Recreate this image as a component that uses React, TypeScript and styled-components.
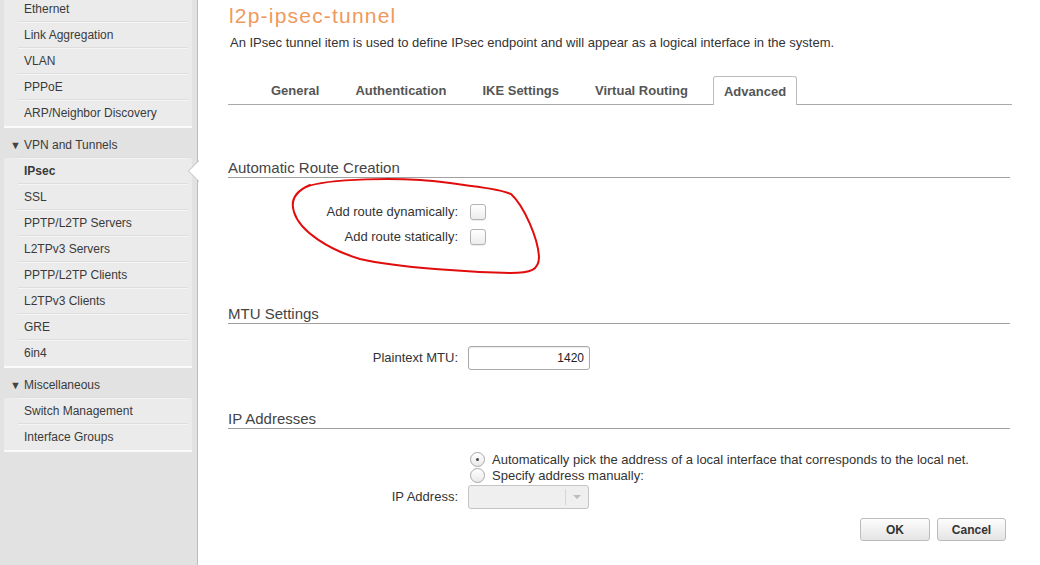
import React from 'react'
import styled, { createGlobalStyle } from 'styled-components'

const GlobalStyle = createGlobalStyle`
  html, body {
    margin: 0;
    padding: 0;
    background: #fff;
    font-family: "Liberation Sans", Arial, sans-serif;
    color: #333;
  }
`

const Page = styled.div`
  display: flex;
  width: 1040px;
  height: 565px;
  overflow: hidden;
`

const Sidebar = styled.nav`
  width: 197px;
  flex-shrink: 0;
  background: #e2e2e2;
  border-right: 1px solid #bcbcbc;
  font-size: 12px;
  color: #3a3a3a;
`

const Group = styled.div<{ $first?: boolean }>`
  margin: ${(p) => (p.$first ? '-4px' : '0')} 5px 0 4px;
  background: #ebebeb;
  border-bottom: 2px solid #fafafa;
`

const GroupHeader = styled.div`
  display: flex;
  align-items: center;
  height: 27px;
  margin-top: 3px;
  padding-left: 10px;
  gap: 3px;
`

const Caret = styled.span`
  font-size: 11px;
  width: 11px;
  color: #444;
`

const Item = styled.div<{ $active?: boolean }>`
  position: relative;
  height: 26px;
  display: flex;
  align-items: center;
  padding-left: 20px;
  font-weight: ${(p) => (p.$active ? 'bold' : 'normal')};
  &::before {
    content: '';
    position: absolute;
    top: 0;
    left: 14px;
    right: 4px;
    height: 1px;
    background: #f5f5f5;
    box-shadow: 0 -1px 0 #dedede;
  }
`

const Notch = styled.span`
  position: absolute;
  right: -7px;
  top: 2px;
  width: 0;
  height: 0;
  border-top: 11px solid transparent;
  border-bottom: 11px solid transparent;
  border-right: 11px solid #bcbcbc;
  &::after {
    content: '';
    position: absolute;
    left: 1px;
    top: -11px;
    border-top: 11px solid transparent;
    border-bottom: 11px solid transparent;
    border-right: 11px solid #fff;
  }
`

const Main = styled.main`
  flex: 1;
  padding: 4px 28px 0 30px;
  min-width: 0;
`

const Title = styled.h1`
  margin: 0 0 0 1px;
  font-size: 21px;
  line-height: 24px;
  font-weight: normal;
  letter-spacing: 1.2px;
  color: #f0995c;
`

const Description = styled.p`
  margin: 7px 0 0 2px;
  font-size: 13px;
  line-height: 16px;
  color: #333;
`

const Tabs = styled.div`
  display: flex;
  gap: 14px;
  height: 28px;
  margin-top: 25px;
  padding-left: 32px;
  border-bottom: 1px solid #a9a9a9;
`

const Tab = styled.div<{ $active?: boolean }>`
  display: flex;
  align-items: center;
  padding: 0 10px;
  font-size: 13px;
  font-weight: bold;
  color: #555;
  border: 1px solid ${(p) => (p.$active ? '#bcbcbc' : 'transparent')};
  border-bottom: none;
  border-radius: 3px 3px 0 0;
  background: #fff;
  margin-bottom: ${(p) => (p.$active ? '-1px' : '0')};
`

const Section = styled.section<{ $top: number }>`
  margin-top: ${(p) => p.$top}px;
  margin-right: 2px;
`

const Heading = styled.h2`
  margin: 0;
  font-size: 15px;
  line-height: 18px;
  font-weight: normal;
  color: #444;
  border-bottom: 1px solid #a0a0a0;
`

const Body = styled.div<{ $pt?: number }>`
  position: relative;
  display: grid;
  grid-template-columns: 230px 1fr;
  column-gap: 10px;
  padding-top: ${(p) => p.$pt ?? 21}px;
  font-size: 13px;
`

const Label = styled.label`
  grid-column: 1;
  text-align: right;
  align-self: center;
  color: #333;
`

const Row = styled.div`
  display: contents;
`

const Control = styled.div<{ $h?: number; $mt?: number }>`
  grid-column: 2;
  display: flex;
  align-items: center;
  height: ${(p) => p.$h ?? 25}px;
  margin-top: ${(p) => p.$mt ?? 0}px;
`

const Checkbox = styled.span`
  width: 14px;
  height: 14px;
  margin-left: 2px;
  border: 1px solid #b3b3b3;
  border-radius: 3px;
  background: linear-gradient(#ffffff, #ececec);
  box-shadow: 0 1px 1px rgba(0, 0, 0, 0.08);
`

const TextInput = styled.div`
  box-sizing: border-box;
  width: 122px;
  height: 24px;
  border: 1px solid #a8a8a8;
  border-radius: 3px;
  box-shadow: inset 0 1px 1px rgba(0, 0, 0, 0.08);
  display: flex;
  align-items: center;
  justify-content: flex-end;
  padding-right: 5px;
  font-size: 12px;
  color: #222;
`

const Select = styled.div`
  box-sizing: border-box;
  width: 121px;
  height: 24px;
  border: 1px solid #c4c4c4;
  border-radius: 3px;
  background: #efefef;
  display: flex;
  justify-content: flex-end;
`

const SelectArrow = styled.span`
  width: 22px;
  border-left: 1px solid #d6d6d6;
  margin: 3px 0;
  display: flex;
  align-items: center;
  justify-content: center;
  &::after {
    content: '';
    border-left: 4px solid transparent;
    border-right: 4px solid transparent;
    border-top: 4px solid #bdbdbd;
  }
`

const Radio = styled.span<{ $checked?: boolean }>`
  box-sizing: border-box;
  width: 15px;
  height: 15px;
  margin: 0 7px 0 2px;
  border: 1px solid #a9a9a9;
  border-radius: 50%;
  background: linear-gradient(#ffffff, #e9e9e9);
  display: flex;
  align-items: center;
  justify-content: center;
  flex-shrink: 0;
  &::after {
    content: '';
    display: ${(p) => (p.$checked ? 'block' : 'none')};
    width: 3px;
    height: 3px;
    border-radius: 50%;
    background: #444;
  }
`

const RadioText = styled.span`
  font-size: 13px;
  white-space: nowrap;
  color: #333;
`

const Scribble = styled.svg`
  position: absolute;
  left: 62px;
  top: -3px;
  pointer-events: none;
`

const Buttons = styled.div`
  display: flex;
  justify-content: flex-end;
  gap: 7px;
  margin: 9px 6px 0 0;
`

const Button = styled.button<{ $w: number }>`
  width: ${(p) => p.$w}px;
  height: 23px;
  padding: 0;
  border: 1px solid #bcbcbc;
  border-radius: 3px;
  background: linear-gradient(#fdfdfd, #e4e4e4);
  font-family: "Liberation Sans", Arial, sans-serif;
  font-size: 12px;
  font-weight: bold;
  color: #333;
`

const groups = [
  {
    header: null,
    items: ['Ethernet', 'Link Aggregation', 'VLAN', 'PPPoE', 'ARP/Neighbor Discovery'],
  },
  {
    header: 'VPN and Tunnels',
    items: ['IPsec', 'SSL', 'PPTP/L2TP Servers', 'L2TPv3 Servers', 'PPTP/L2TP Clients', 'L2TPv3 Clients', 'GRE', '6in4'],
  },
  {
    header: 'Miscellaneous',
    items: ['Switch Management', 'Interface Groups'],
  },
]

const tabs = ['General', 'Authentication', 'IKE Settings', 'Virtual Routing', 'Advanced']

const App = () => {
  return (
    <Page>
      <GlobalStyle />
      <Sidebar>
        {groups.map((g, gi) => (
          <React.Fragment key={gi}>
            {g.header && (
              <GroupHeader>
                <Caret>▼</Caret>
                {g.header}
              </GroupHeader>
            )}
            <Group $first={gi === 0}>
              {g.items.map((it) => (
                <Item key={it} $active={it === 'IPsec'}>
                  {it}
                  {it === 'IPsec' && <Notch />}
                </Item>
              ))}
            </Group>
          </React.Fragment>
        ))}
      </Sidebar>

      <Main>
        <Title>l2p-ipsec-tunnel</Title>
        <Description>
          An IPsec tunnel item is used to define IPsec endpoint and will appear as a logical interface in the system.
        </Description>

        <Tabs>
          {tabs.map((t) => (
            <Tab key={t} $active={t === 'Advanced'}>{t}</Tab>
          ))}
        </Tabs>

        <Section $top={54}>
          <Heading>Automatic Route Creation</Heading>
          <Body>
            <Row>
              <Label>Add route dynamically:</Label>
              <Control><Checkbox /></Control>
            </Row>
            <Row>
              <Label>Add route statically:</Label>
              <Control><Checkbox /></Control>
            </Row>
            <Scribble width="255" height="103" viewBox="290 175 255 103">
              <path
                d="M306 187 C 325 179, 400 176, 450 183 C 480 187, 498 189, 511 194 C 524 206, 538 238, 539 257 C 539 270, 531 273, 510 273 C 470 272, 400 268, 360 259 C 330 250, 300 232, 294 212 C 290 200, 296 191, 310 185"
                fill="none"
                stroke="#e10d0d"
                strokeWidth="2"
                strokeLinecap="round"
              />
            </Scribble>
          </Body>
        </Section>

        <Section $top={56}>
          <Heading>MTU Settings</Heading>
          <Body>
            <Row>
              <Label>Plaintext MTU:</Label>
              <Control><TextInput>1420</TextInput></Control>
            </Row>
          </Body>
        </Section>

        <Section $top={40}>
          <Heading>IP Addresses</Heading>
          <Body $pt={22}>
            <Control $h={16}>
              <Radio $checked />
              <RadioText>Automatically pick the address of a local interface that corresponds to the local net.</RadioText>
            </Control>
            <Control $h={16}>
              <Radio />
              <RadioText>Specify address manually:</RadioText>
            </Control>
            <Row>
              <Label>IP Address:</Label>
              <Control $mt={1}>
                <Select><SelectArrow /></Select>
              </Control>
            </Row>
          </Body>
        </Section>

        <Buttons>
          <Button $w={70}>OK</Button>
          <Button $w={69}>Cancel</Button>
        </Buttons>
      </Main>
    </Page>
  )
}

export default App
